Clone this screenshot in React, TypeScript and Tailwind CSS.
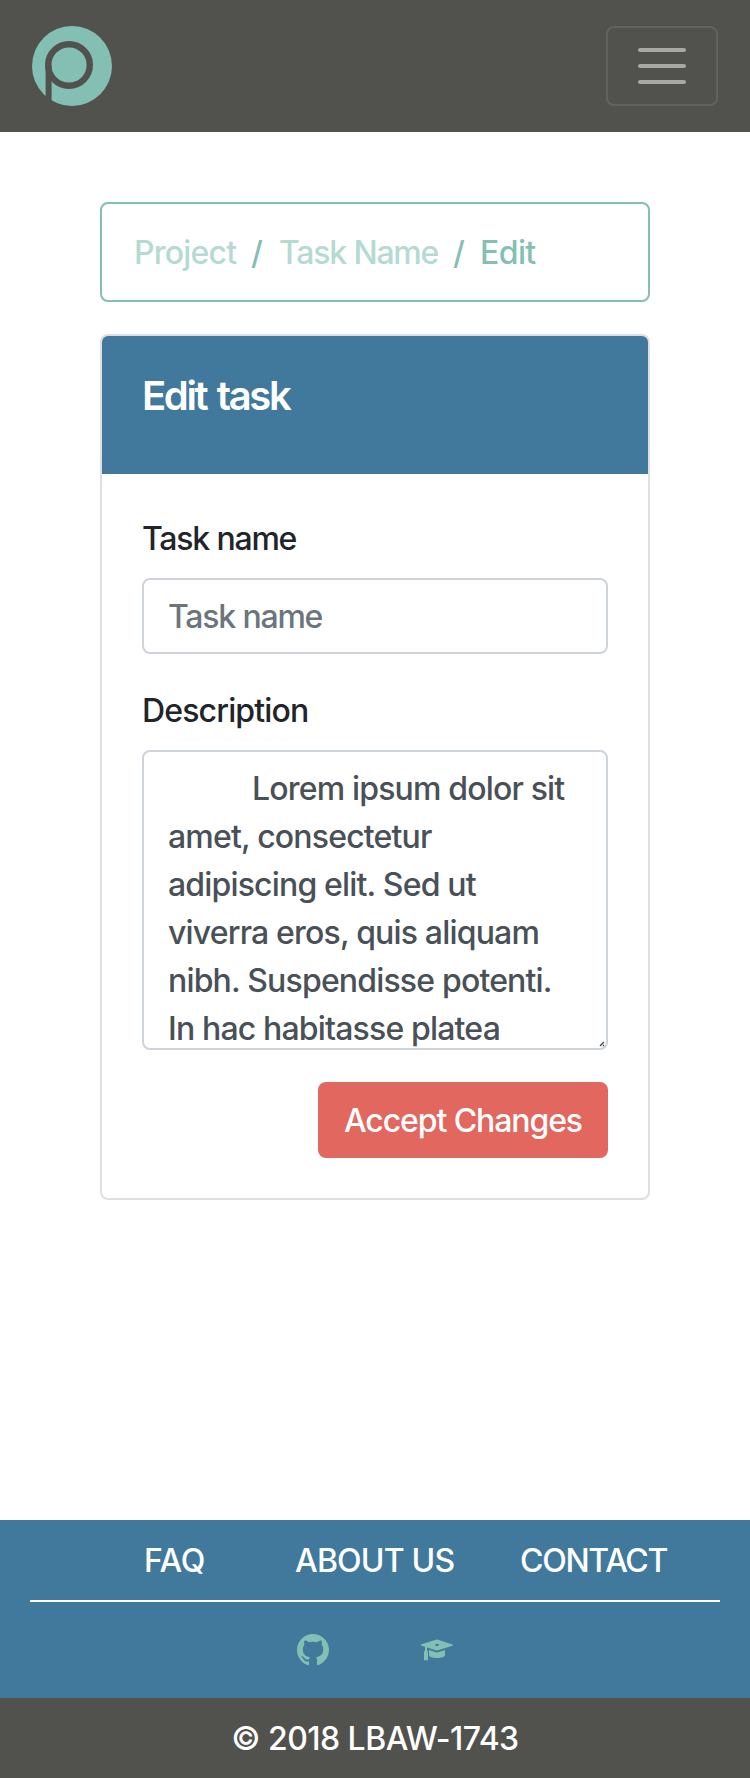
import React from "react";

function Logo() {
  return (
    <svg viewBox="0 0 80 80" className="size-20" aria-label="Plenum">
      <circle cx="40" cy="40" r="40" fill="#84bfb3" />
      <path d="M16.6 90V39" stroke="#51514e" strokeWidth="6" fill="none" />
      <circle cx="37" cy="39" r="20.8" stroke="#51514e" strokeWidth="6.4" fill="none" />
    </svg>
  );
}

function Navbar() {
  return (
    <nav className="flex h-[132px] items-center justify-between border-b border-[#574f4f] bg-[#51514e] px-8">
      <a href="#">
        <Logo />
      </a>
      <button
        type="button"
        aria-label="Toggle navigation"
        className="flex h-20 w-28 flex-col items-center justify-center gap-3 rounded-lg border-2 border-[#626260]"
      >
        <span className="h-1 w-12 rounded-full bg-[#a8a8a7]" />
        <span className="h-1 w-12 rounded-full bg-[#a8a8a7]" />
        <span className="h-1 w-12 rounded-full bg-[#a8a8a7]" />
      </button>
    </nav>
  );
}

function Breadcrumb() {
  return (
    <ol className="flex h-[100px] items-center rounded-lg border-2 border-[#84bfb3] px-8 pt-0.5 text-[#84bfb3]">
      <li className="w-[117px] text-[#b5dad1]">
        <a href="#" className="tracking-[-0.8px]">Project</a>
      </li>
      <li className="w-[28px]">/</li>
      <li className="w-[174px] text-[#b5dad1]">
        <a href="#" className="tracking-[-1.2px]">Task Name</a>
      </li>
      <li className="w-[27px]">/</li>
      <li className="tracking-[-0.6px]">Edit</li>
    </ol>
  );
}

const description = [
  "          Lorem ipsum dolor sit",
  "amet, consectetur",
  "adipiscing elit. Sed ut",
  "viverra eros, quis aliquam",
  "nibh. Suspendisse potenti.",
  "In hac habitasse platea",
  "dictumst.",
].join("\n");

function TaskForm() {
  return (
    <section className="mt-8 h-[866px] overflow-hidden rounded-lg border-2 border-[#dfdfdf]">
      <header className="h-[138px] bg-[#41799c] px-10 pt-[30px]">
        <h5 className="text-[40px] leading-[60px] font-semibold tracking-[-2.4px] text-white [word-spacing:3px]">Edit task</h5>
      </header>
      <form className="flex flex-col px-10 pt-[41px]">
        <label htmlFor="name" className="tracking-[-1.2px] text-[#212529]">Task name</label>
        <input
          id="name"
          placeholder="Task name"
          className="mt-[15px] h-[76px] rounded-lg border-2 border-[#ced4da] px-6 pt-px tracking-[-1.2px] placeholder:text-[#6c757d]"
        />
        <label htmlFor="description" className="mt-[33px] tracking-[-0.85px] text-[#212529]">Description</label>
        <div className="relative mt-[15px] h-[300px]">
          <textarea
            id="description"
            defaultValue={description}
            className="block h-[300px] w-full resize-none overflow-hidden rounded-lg border-2 border-[#ced4da] px-6 py-[13px] indent-[7px] tracking-[-0.83px] whitespace-pre text-[#495057]"
          />
          <svg viewBox="0 0 6 6" className="absolute right-[3px] bottom-[3px] size-[6px]">
            <path d="M1 5L5 1M4 5L5 4" stroke="#444" strokeWidth="1.3" />
          </svg>
        </div>
        <button
          type="button"
          className="mt-8 h-[76px] w-[290px] self-end rounded-lg bg-[#e1675f] pt-0.5 font-medium tracking-[-1.1px] text-white"
        >
          Accept Changes
        </button>
      </form>
    </section>
  );
}

function Footer() {
  return (
    <footer className="font-medium text-white">
      <div className="h-[178px] bg-[#41799c] px-[30px] pt-[17px]">
        <div className="flex h-[65px] border-b-2 border-white">
          <a href="#" className="ml-[114px] w-[151px] tracking-[-0.4px]">FAQ</a>
          <a href="#" className="w-[225px] tracking-[-0.8px]">ABOUT US</a>
          <a href="#" className="tracking-[-1.3px]">CONTACT</a>
        </div>
        <div className="flex justify-center gap-[92px] pt-8 text-[#84bfb3]">
          <svg viewBox="0 0 16 16" className="size-8" fill="currentColor">
            <path d="M8 0C3.58 0 0 3.58 0 8c0 3.54 2.29 6.53 5.47 7.59.4.07.55-.17.55-.38 0-.19-.01-.82-.01-1.49-2.01.37-2.53-.49-2.69-.94-.09-.23-.48-.94-.82-1.13-.28-.15-.68-.52-.01-.53.63-.01 1.08.58 1.23.82.72 1.21 1.87.87 2.33.66.07-.52.28-.87.51-1.07-1.78-.2-3.64-.89-3.64-3.95 0-.87.31-1.59.82-2.15-.08-.2-.36-1.02.08-2.12 0 0 .67-.21 2.2.82.64-.18 1.32-.27 2-.27s1.36.09 2 .27c1.53-1.04 2.2-.82 2.2-.82.44 1.1.16 1.92.08 2.12.51.56.82 1.27.82 2.15 0 3.07-1.87 3.75-3.65 3.95.29.25.54.73.54 1.48 0 1.07-.01 1.93-.01 2.2 0 .21.15.46.55.38A8.01 8.01 0 0 0 16 8c0-4.42-3.58-8-8-8z" />
          </svg>
          <svg viewBox="0 0 16 16" className="size-8" fill="currentColor" fillRule="evenodd">
            <path d="M8.11 2.8a.34.34 0 0 0-.2 0L.27 5.18a.35.35 0 0 0 0 .67L2 6.4v1.77c-.3.17-.5.5-.5.86v4.08c0 .1 2 .1 2 0V9.03c0-.38-.2-.69-.5-.86V6.72l4.89 1.53c.06.02.14.02.2 0l7.64-2.38a.35.35 0 0 0 0-.67zM7.02 5.5c0-.28.45-.5 1-.5s1 .22 1 .5-.45.5-1 .5-1-.22-1-.5z" />
            <path d="M4 8l3.81 1.19c.13.03.25.03.36 0L12 8v2.5c0 1-1.8 1.5-4 1.5s-4-.5-4-1.5z" />
          </svg>
        </div>
      </div>
      <div className="h-20 bg-[#51514e] pt-[17px] text-center tracking-[-0.55px]">© 2018 LBAW-1743</div>
    </footer>
  );
}

export default function App() {
  return (
    <div className="flex h-[1778px] w-[750px] flex-col bg-white font-[Inter,sans-serif] text-[32px] leading-[48px] font-[450]">
      <Navbar />
      <main className="flex-1 px-[100px] pt-[70px]">
        <Breadcrumb />
        <TaskForm />
      </main>
      <Footer />
    </div>
  );
}
